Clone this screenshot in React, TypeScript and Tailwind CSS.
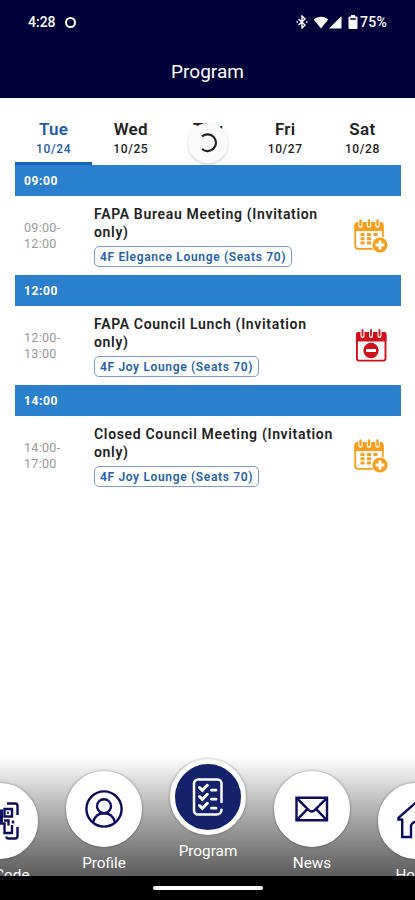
import clsx from "clsx";
import type { ReactNode } from "react";

const days = [
  { name: "Tue", date: "10/24" },
  { name: "Wed", date: "10/25" },
  { name: "Thu", date: "10/26" },
  { name: "Fri", date: "10/27" },
  { name: "Sat", date: "10/28" },
];

const sessions = [
  {
    start: "09:00",
    end: "12:00",
    title: "FAPA Bureau Meeting (Invitation only)",
    room: "4F Elegance Lounge (Seats 70)",
    added: false,
  },
  {
    start: "12:00",
    end: "13:00",
    title: "FAPA Council Lunch (Invitation only)",
    room: "4F Joy Lounge (Seats 70)",
    added: true,
  },
  {
    start: "14:00",
    end: "17:00",
    title: "Closed Council Meeting (Invitation only)",
    room: "4F Joy Lounge (Seats 70)",
    added: false,
  },
];

const CalendarAddIcon = () => (
  <svg width="34" height="34" viewBox="0 0 34 34" fill="none">
    <rect x="1.2" y="4.2" width="27.6" height="25.6" rx="3" stroke="#f99d1c" strokeWidth="1.8" />
    <path d="M.5 12V6a3 3 0 0 1 3-3h23a3 3 0 0 1 3 3v6z" fill="#f99d1c" />
    {[6.5, 15, 23.5].map((x) => (
      <g key={x}>
        <path d={`M${x} 1.500v5`} stroke="#fff" strokeWidth="4.4" strokeLinecap="round" />
        <path d={`M${x} 1.500v4.500`} stroke="#f99d1c" strokeWidth="2.4" strokeLinecap="round" />
      </g>
    ))}
    <path
      d="M6.500 15.500h4M13 15.500h4M19.500 15.500h4M6.500 19.800h4M13 19.800h4M6.500 24.100h4M13 24.100h4"
      stroke="#f99d1c"
      strokeWidth="3"
    />
    <circle cx="26" cy="26" r="8.4" fill="#fff" />
    <circle cx="26" cy="26" r="7.6" fill="#f99d1c" />
    <path d="M26 21.500v9M21.500 26h9" stroke="#fff" strokeWidth="2.8" />
  </svg>
);

const CalendarRemoveIcon = () => (
  <svg width="34" height="34" viewBox="0 0 34 34" fill="none">
    <rect x="2.9" y="4.2" width="28.6" height="27.4" rx="2" stroke="#d0111b" strokeWidth="1.9" />
    <path d="M2 12.500V5a2 2 0 0 1 2-2h26.400a2 2 0 0 1 2 2v7.500z" fill="#d0111b" />
    {[8.5, 17, 25.5].map((x) => (
      <g key={x}>
        <path d={`M${x} .5v6.500`} stroke="#fff" strokeWidth="4" strokeLinecap="round" />
        <path d={`M${x} 1v5.500`} stroke="#d0111b" strokeWidth="1.8" strokeLinecap="round" />
      </g>
    ))}
    <circle cx="17" cy="21.5" r="7.7" fill="#d0111b" />
    <path d="M12 21.500h10" stroke="#fff" strokeWidth="3" />
  </svg>
);

const QrIcon = () => (
  <svg width="40" height="40" viewBox="0 0 40 40" fill="none" stroke="#0c0c5e" strokeWidth="2.4">
    <path d="M13 2.500H5.500A2.500 2.500 0 0 0 3 5v8M3 27v8a2.500 2.500 0 0 0 2.500 2.500H13" />
    <path d="M27 2.500h8A2.500 2.500 0 0 1 37.500 5v9M37.500 26v9a2.500 2.500 0 0 1-2.500 2.500h-6.500a2 2 0 0 1-2-2" />
    <path d="M8 8h8v8H8zM8 24h8v8H8zM24.500 8H32v7.500h-7.500z" />
    <path d="M28 10.500v2.500" strokeWidth="1.6" />
    <path d="M21 8.500v13" strokeWidth="4" />
    <path d="M20 22.500h4.500v9.500H32v-8M24 19.500h4.500v5M33 19.500v3" />
  </svg>
);

const ProfileIcon = () => (
  <svg width="40" height="40" viewBox="0 0 40 40" fill="none" stroke="#0c0c5e" strokeWidth="2.4">
    <circle cx="20" cy="20" r="17.6" />
    <circle cx="20" cy="17.2" r="7" />
    <path d="M9 33.200c1.600-5.800 5.800-9 11-9s9.400 3.200 11 9" />
  </svg>
);

const ProgramIcon = () => (
  <svg
    width="40"
    height="40"
    viewBox="0 0 40 40"
    fill="none"
    stroke="#fff"
    strokeWidth="2.5"
    strokeLinecap="round"
  >
    <path d="M33.500 25V6.500a4 4 0 0 0-4-4h-19.500a4 4 0 0 0-4 4v27a4 4 0 0 0 4 4h18.500c3 0 5-2 5-4.800" />
    <path d="M11.500 10.500l2.800 2.800 5-5M11.500 19.500l2.800 2.800 5-5M11.500 28.500l2.800 2.800 5-5" strokeWidth="3" />
    <path d="M23.500 13.200h4.500M23.500 22.200h4.500M23.500 31.200h4.500" strokeWidth="2.8" />
  </svg>
);

const NewsIcon = () => (
  <svg width="40" height="40" viewBox="0 0 40 40" fill="none" stroke="#0c0c5e" strokeWidth="2.4">
    <path d="M4.500 8.800h30.500v22.500H4.500z" />
    <path d="M4.500 8.800L17 21.300a3.800 3.800 0 0 0 5.400 0L35 8.800M4.500 31.300l11-11.500M35 31.300l-11-11.500" />
  </svg>
);

const HomeIcon = () => (
  <svg width="40" height="40" viewBox="0 0 40 40" fill="none" stroke="#0c0c5e" strokeWidth="2.4">
    <path d="M5.500 18.500H2.500v-1.700L20 1.500l17.500 15.300v1.700h-3M6.200 17.500v18.500h8.800V26a5 5 0 0 1 10 0v10h8.800V17.500" />
  </svg>
);

type NavItem = { label: string; icon: ReactNode; active?: boolean; offset: string };

const navItems: NavItem[] = [
  { label: "QR Code", icon: <QrIcon />, offset: "pt-6" },
  { label: "Profile", icon: <ProfileIcon />, offset: "pt-3" },
  { label: "Program", icon: <ProgramIcon />, offset: "pt-0", active: true },
  { label: "News", icon: <NewsIcon />, offset: "pt-3" },
  { label: "Home", icon: <HomeIcon />, offset: "pt-6" },
];

const StatusBar = () => (
  <div className="flex h-11 items-center justify-between pr-7 pl-7 text-[14px] font-medium">
    <div className="flex items-center gap-[9px]">
      <span>4:28</span>
      <span className="size-[11px] rounded-full border-[2.5px] border-white" />
    </div>
    <div className="flex items-center">
      <svg width="12" height="14" viewBox="0 0 12 14" fill="none" stroke="#fff" strokeWidth="1.4">
        <path d="M2.500 4l6.500 6-3 3V1l3 3-6.500 6M.5 7h1.500M10 7h1.500" />
      </svg>
      <svg className="ml-[5px]" width="16" height="13" viewBox="0 0 16 13" fill="#fff">
        <path d="M.8 3.500C4.800-.2 11.200-.2 15.200 3.500L8 12.500z" />
      </svg>
      <svg width="13" height="13" viewBox="0 0 13 13" fill="#fff">
        <path d="M12.500 0v12.500H0z" />
      </svg>
      <svg className="mr-[2px] ml-[6px]" width="10" height="14" viewBox="0 0 10 14" fill="#fff">
        <path d="M3 0h4v1.500h1.500a1 1 0 0 1 1 1V13a1 1 0 0 1-1 1h-7a1 1 0 0 1-1-1V2.500a1 1 0 0 1 1-1H3z" />
        <path d="M2.200 3.200h5.600v1.600H2.200z" fill="#02023a" />
      </svg>
      <span className="tracking-[0.3px]">75%</span>
    </div>
  </div>
);

const DayTabs = () => (
  <div className="relative mr-[14px] ml-[15px] flex h-[67px]">
    {days.map((day, i) => (
      <button
        key={day.name}
        className={clsx(
          "flex flex-1 flex-col items-center border-b-[3px] pt-5",
          i === 0 ? "border-[#1a62b5] text-[#1f5caa]" : "border-transparent text-[#222]",
        )}
      >
        <span className="text-[17px] leading-[22px] font-semibold tracking-[0.3px]">{day.name}</span>
        <span className="mt-px text-[12px] leading-[17px] font-medium tracking-[0.6px]">{day.date}</span>
      </button>
    ))}
    {/* pull-to-refresh spinner */}
    <div className="absolute top-[25px] left-[173px] flex size-10 items-center justify-center rounded-full bg-[#fafafa] shadow-[0_1px_3px_rgba(0,0,0,0.2)]">
      <svg width="22" height="22" viewBox="0 0 22 22" fill="none" stroke="#222" strokeWidth="2.2">
        <path d="M5 4.500A8.400 8.400 0 1 1 5 17" />
      </svg>
    </div>
  </div>
);

export default function App() {
  return (
    <div className="flex h-[900px] w-[415px] flex-col overflow-hidden bg-white font-[Roboto,sans-serif]">
      <header className="h-[98px] shrink-0 bg-[#02023a] text-white">
        <StatusBar />
        <h1 className="pt-[14px] text-center text-[19px] leading-[27px]">Program</h1>
      </header>

      <DayTabs />

      <main className="mr-[14px] ml-[15px] flex-1">
        {sessions.map((s) => (
          <section key={s.start} className="h-[110px]">
            <h2 className="h-[31px] bg-[#2b80cd] pl-[9px] text-[12px] leading-[32px] font-bold tracking-[0.6px] text-white">
              {s.start}
            </h2>
            <div className="flex h-[79px]">
              <p className="w-[79px] pt-[24px] pl-[9px] text-[12.5px] leading-[15.5px] tracking-[0.3px] text-[#999]">
                {s.start}-<br />
                {s.end}
              </p>
              <div className="w-[242px] pt-[9px]">
                <h3 className="text-[14px] leading-[18px] font-semibold tracking-[0.67px] text-[#222]">{s.title}</h3>
                <span className="mt-[5px] inline-flex h-[21px] items-center rounded-[5px] border border-[#7d9dc8] px-[5px] text-[12px] font-semibold tracking-[0.66px] text-[#2460a8]">
                  {s.room}
                </span>
              </div>
              <button className="ml-[18px] flex h-full items-start pt-[23px]">
                {s.added ? <CalendarRemoveIcon /> : <CalendarAddIcon />}
              </button>
            </div>
          </section>
        ))}
      </main>

      <nav className="h-[119px] shrink-0 overflow-hidden bg-linear-to-b from-white to-[#5c5c5c] pt-[2px]">
        <div className="-ml-[38px] flex w-[492px] gap-7">
          {navItems.map((item) => (
            <div key={item.label} className={clsx("flex w-19 shrink-0 flex-col items-center", item.offset)}>
              <div
                className={clsx(
                  "flex size-19 items-center justify-center rounded-full border-white shadow-[0_0_2px_1px_rgba(0,0,0,0.2)]",
                  item.active ? "border-[5px] bg-[#13226b]" : "border-2 bg-white",
                )}
              >
                {item.icon}
              </div>
              <span className="mt-[6px] text-[15.3px] leading-5 whitespace-nowrap text-white">{item.label}</span>
            </div>
          ))}
        </div>
      </nav>

      <footer className="flex h-6 shrink-0 justify-center bg-black pt-[10px]">
        <span className="h-1 w-[110px] rounded-full bg-white" />
      </footer>
    </div>
  );
}
